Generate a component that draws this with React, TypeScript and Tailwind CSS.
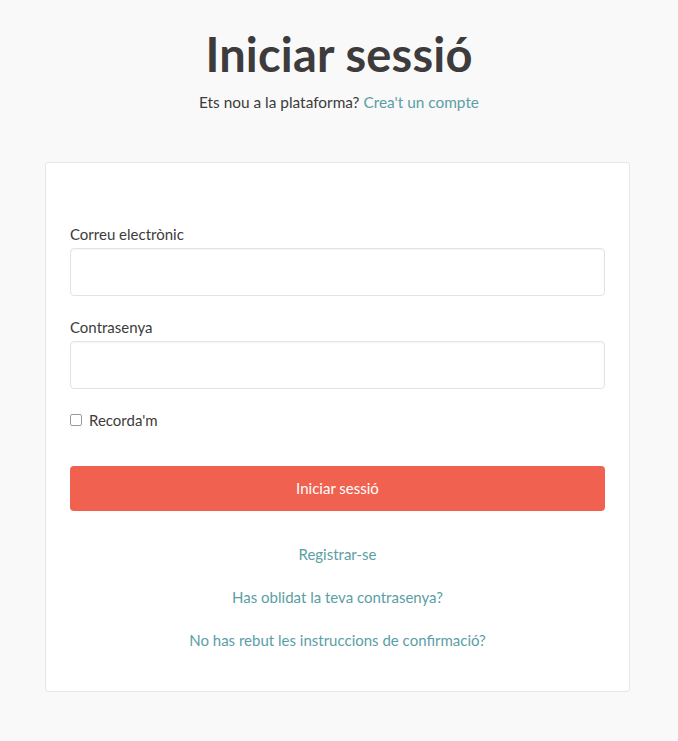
import React from "react";

const font = { fontFamily: "Lato, 'Noto Sans', 'Liberation Sans', sans-serif" };

export default function App() {
  const [remember, setRemember] = React.useState(false);

  return (
    <main
      className="min-h-[741px] bg-[#f9f9f9] pt-[26px] text-[#3d3b3c]"
      style={font}
    >
      {/* header */}
      <h1 className="text-center text-[47px] leading-[56px] font-bold tracking-[0.2px]">
        Iniciar sessió
      </h1>
      <p className="mt-[9px] text-center text-[15.4px] leading-[22px]">
        Ets nou a la plataforma?{" "}
        <a href="#" className="text-[#5a9ea6]">
          Crea't un compte
        </a>
      </p>

      {/* card */}
      <div className="ml-[45px] mt-[49px] w-[585px] rounded-[3px] border border-[#e6e6e6] bg-white px-[24px] pt-[60px] pb-[40px]">
        <form className="flex flex-col" onSubmit={(e) => e.preventDefault()}>
          <Field label="Correu electrònic" type="email" />
          <div className="h-[20px]" />
          <Field label="Contrasenya" type="password" />

          <label className="mt-[20px] flex items-center gap-[7px] text-[15px] leading-[22px]">
            <input
              type="checkbox"
              checked={remember}
              onChange={(e) => setRemember(e.target.checked)}
              className="h-[12px] w-[12px] appearance-none rounded-[2px] border border-[#9a9a9a] bg-white checked:bg-[#5a9ea6]"
            />
            Recorda'm
          </label>

          <button
            type="submit"
            className="mt-[35px] h-[45px] rounded-[4px] bg-[#f0624f] text-[15px] text-white"
          >
            Iniciar sessió
          </button>

          <div className="mt-[32px] flex flex-col items-center gap-[21px] text-[15px] leading-[22px] text-[#5a9ea6]">
            <a href="#">Registrar-se</a>
            <a href="#">Has oblidat la teva contrasenya?</a>
            <a href="#">No has rebut les instruccions de confirmació?</a>
          </div>
        </form>
      </div>
    </main>
  );
}

function Field({ label, type }: { label: string; type: string }) {
  return (
    <label className="flex flex-col text-[15px] leading-[22px]">
      <span className="mb-[3px]">{label}</span>
      <input
        type={type}
        className="h-[48px] rounded-[4px] border border-[#e3e3e3] bg-white px-3 shadow-[inset_0_1px_2px_rgba(0,0,0,0.04)] outline-none"
      />
    </label>
  );
}
